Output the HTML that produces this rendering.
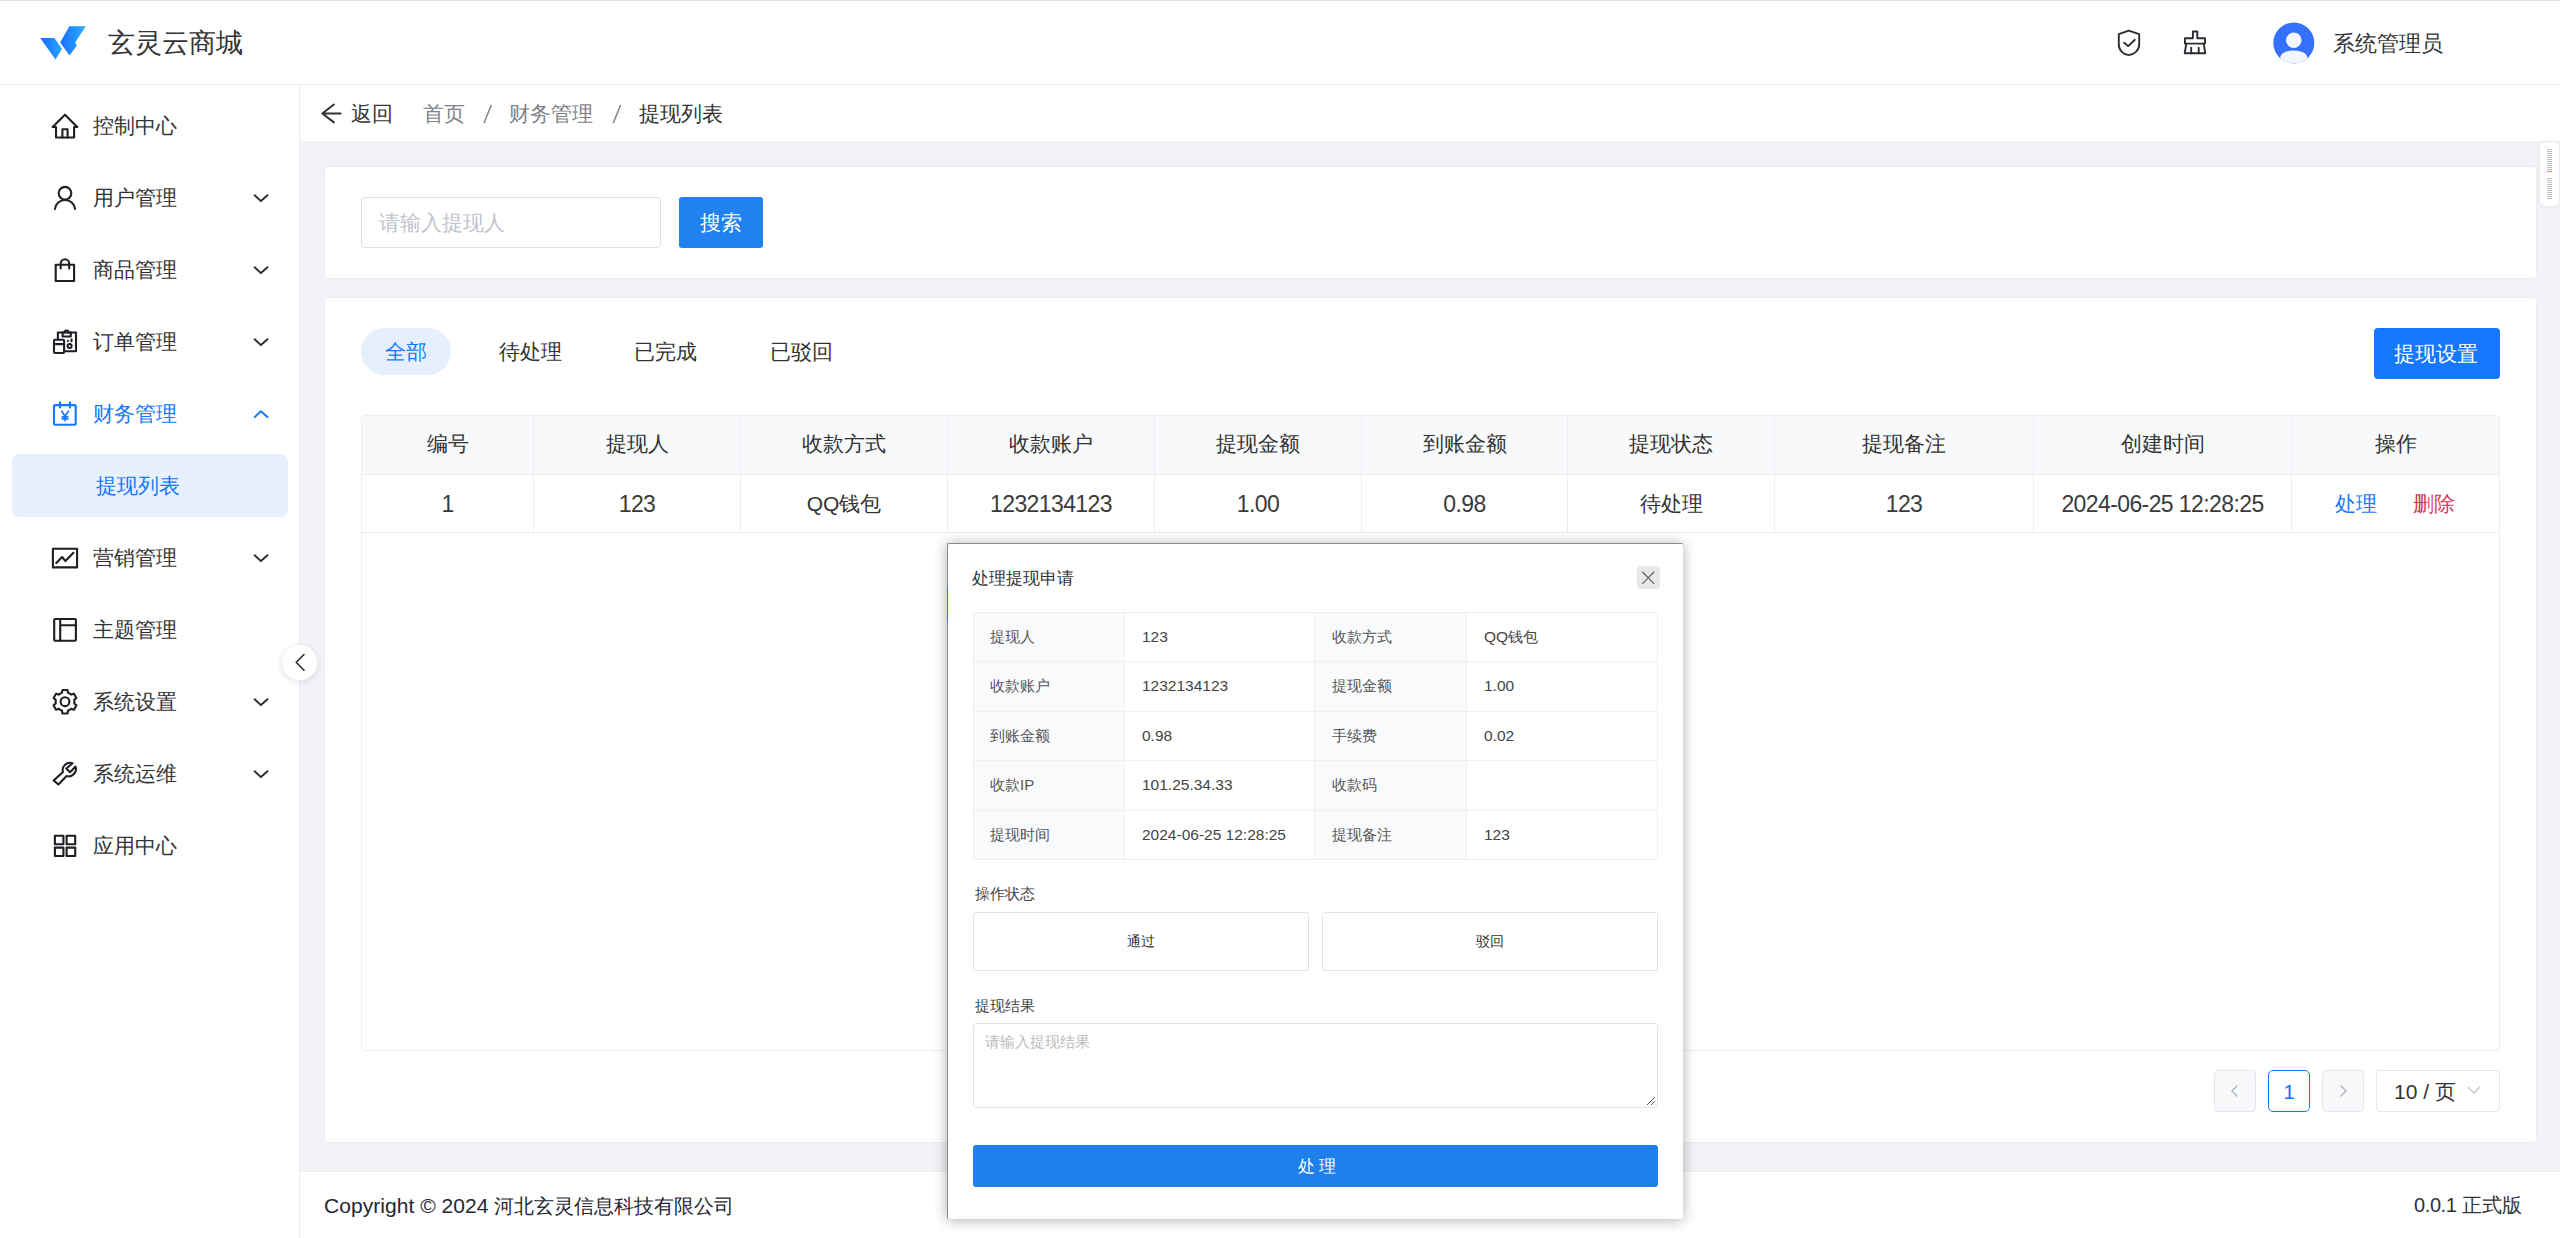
<!DOCTYPE html>
<html><head><meta charset="utf-8">
<style>
*{box-sizing:border-box;margin:0;padding:0}
html,body{width:2560px;height:1238px;overflow:hidden;background:#fff;font-family:"Liberation Sans",sans-serif;color:#333}
.a{position:absolute}
.t{position:absolute;white-space:nowrap;line-height:1}
svg{position:absolute;overflow:visible}
.ic{width:40px;height:40px;left:45px}
.ic *{fill:none;stroke:#1c1f23;stroke-width:2.1;stroke-linejoin:round;stroke-linecap:round}
.ic.blue *{stroke:#1677ff}
.chev{left:245px;width:30px;height:30px}
.chev *{fill:none;stroke:#2a2d31;stroke-width:2;stroke-linecap:round;stroke-linejoin:round}
.mi{font-size:21px;left:93px;color:#333}
.th{font-size:21px;color:#333;text-align:center}
.td{font-size:21px;color:#333;text-align:center}
.vl{position:absolute;width:1px;background:#ebeef5}
.hl{position:absolute;height:1px;background:#ebeef5}
.dl{font-size:15px;color:#555}
.dv{font-size:15.5px;color:#444}
.n{font-size:23px;letter-spacing:-0.6px;color:#3a3a3a}
</style></head><body>
<!-- top line -->
<div class="a" style="left:0;top:0;width:2560px;height:1px;background:#dddfdc"></div>
<!-- header -->
<div class="a" style="left:0;top:84px;width:2560px;height:1px;background:#eceef3"></div>
<svg style="left:0;top:0;width:100px;height:80px" viewBox="0 0 100 80">
<defs><linearGradient id="lg" x1="0" y1="0" x2="1" y2="0"><stop offset="0" stop-color="#1668ff"/><stop offset="1" stop-color="#2aa6ff"/></linearGradient>
<linearGradient id="lg2" x1="0" y1="0" x2="1" y2="0"><stop offset="0" stop-color="#1a6dff"/><stop offset="1" stop-color="#2ab0ff"/></linearGradient></defs>
<path d="M40.2 38.1 L54.4 38.1 L62 49 L55.5 59.6 Z" fill="url(#lg)"/>
<path d="M69.3 26.3 L85.8 26.3 L75.1 42.5 L76.9 45.4 L69.5 55.6 L60.2 42.5 Z" fill="url(#lg2)"/>
</svg>
<div class="t" style="left:108px;top:30px;font-size:27px;color:#333">玄灵云商城</div>

<!-- header right icons -->
<svg style="left:2108px;top:22px;width:40px;height:40px" viewBox="0 0 40 40"><g fill="none" stroke="#2a2d31" stroke-width="1.9" stroke-linejoin="round" stroke-linecap="round">
<path d="M20.7 8.7 L10.8 12.1 V22.6 C10.8 28.5 15.5 32.6 20.7 33.1 C25.9 32.6 31.2 28.5 31.2 22.6 V12.1 Z"/>
<path d="M16.2 20.7 L20.2 24.1 L26.8 17.8"/></g></svg>
<svg style="left:2175px;top:22px;width:40px;height:40px" viewBox="0 0 40 40"><g fill="none" stroke="#2a2d31" stroke-width="1.9" stroke-linejoin="round" stroke-linecap="round">
<path d="M17.9 16.2 V9.5 H22.3 V16.2 H30 V21.6 H9.9 V16.2 Z"/>
<path d="M11.3 21.6 L9.7 31.2 H30.2 L28.8 21.6"/>
<path d="M16.2 25.8 V31.2 M23.7 25.8 V31.2"/></g></svg>
<svg style="left:2265px;top:15px;width:60px;height:60px" viewBox="0 0 60 60">
<defs><clipPath id="av"><circle cx="28.8" cy="27.9" r="20.5"/></clipPath></defs>
<circle cx="28.8" cy="27.9" r="20.5" fill="#3571ff"/>
<g clip-path="url(#av)" fill="#f3f6fe"><circle cx="28.8" cy="25.2" r="7.7"/><ellipse cx="28.8" cy="42.4" rx="13.5" ry="7"/></g>
</svg>
<div class="t" style="left:2333px;top:33px;font-size:22px;color:#333">系统管理员</div>

<!-- sidebar -->
<div class="a" style="left:299px;top:85px;width:1px;height:1153px;background:#eceef3"></div>
<div class="a" style="left:12px;top:454px;width:276px;height:63px;background:#e7f0fe;border-radius:7px"></div>

<svg class="ic" style="top:105px" viewBox="0 0 40 40"><path d="M7.6 22 L20 9.7 L32.3 22 H29.1 V32.5 H11 V22 Z"/><path d="M17.4 32.5 V24.2 H22.6 V32.5"/></svg>
<div class="t mi" style="top:115px">控制中心</div>

<svg class="ic" style="top:177px" viewBox="0 0 40 40"><circle cx="20" cy="16.2" r="6.3"/><path d="M10 32 A10.05 10.05 0 0 1 30 32"/></svg>
<div class="t mi" style="top:187px">用户管理</div>
<svg class="chev" style="top:182px" viewBox="0 0 30 30"><path d="M9.7 13.2 L15.9 19.1 L22.5 13.2"/></svg>

<svg class="ic" style="top:249px" viewBox="0 0 40 40"><rect x="10.7" y="15.8" width="18.4" height="16.2"/><path d="M15.7 19.4 V14.5 A4.25 4.25 0 0 1 24.2 14.5 V19.4"/></svg>
<div class="t mi" style="top:259px">商品管理</div>
<svg class="chev" style="top:254px" viewBox="0 0 30 30"><path d="M9.7 13.2 L15.9 19.1 L22.5 13.2"/></svg>

<svg class="ic" style="top:321px" viewBox="0 0 40 40"><path d="M12.9 18.7 V11.5 H31 V30.2 H19.1"/><path d="M17.6 11.5 V15.5 H25.8 V11.5 H23.6 A2 2 0 0 0 19.6 11.5 Z"/><rect x="9" y="18.7" width="10.1" height="13.3" rx="1"/><path d="M9 23.1 H19.1"/><circle cx="24.6" cy="25" r="2"/><path d="M22.9 19.8 V20 M26.5 18.6 V20.2"/></svg>
<div class="t mi" style="top:331px">订单管理</div>
<svg class="chev" style="top:326px" viewBox="0 0 30 30"><path d="M9.7 13.2 L15.9 19.1 L22.5 13.2"/></svg>

<svg class="ic blue" style="top:393px" viewBox="0 0 40 40"><g><rect x="9" y="12.1" width="21.7" height="19.7" rx="1"/><path d="M15 9.4 V14.5 M24.9 9.4 V14.5"/><path d="M16.8 18.3 L20 23.3 L23.3 18.3 M17.3 23.8 H22.8 M17.3 25.9 H22.8 M20 23.3 V27.6" style="stroke-width:1.7"/></g></svg>
<div class="t mi" style="top:403px;color:#1677ff">财务管理</div>
<svg class="chev" style="top:398px" viewBox="0 0 30 30"><path d="M9.7 19.1 L15.9 13.2 L22.5 19.1" style="stroke:#1677ff"/></svg>

<div class="t mi" style="top:475px;left:96px;color:#1677ff">提现列表</div>

<svg class="ic" style="top:537px" viewBox="0 0 40 40"><rect x="7.9" y="11.8" width="24.2" height="18.6"/><path d="M11.3 26 L17.1 20 L20.4 24.1 L28.4 15.8"/></svg>
<div class="t mi" style="top:547px">营销管理</div>
<svg class="chev" style="top:542px" viewBox="0 0 30 30"><path d="M9.7 13.2 L15.9 19.1 L22.5 13.2"/></svg>

<svg class="ic" style="top:609px" viewBox="0 0 40 40"><rect x="9.2" y="10" width="21.7" height="21.8" rx="1"/><path d="M15.2 10 V31.8 M15.2 16.2 H30.9"/></svg>
<div class="t mi" style="top:619px">主题管理</div>

<svg class="ic" style="top:681px" viewBox="0 0 40 40"><path d="M23.82 12.11 L23.06 11.81 L22.49 8.96 L17.51 8.96 L16.94 11.81 L16.18 12.11 L14.47 13.10 L13.83 13.61 L11.08 12.67 L8.59 16.99 L10.77 18.91 L10.65 19.72 L10.65 21.68 L10.77 22.49 L8.59 24.41 L11.08 28.73 L13.83 27.79 L14.47 28.30 L16.18 29.29 L16.94 29.59 L17.51 32.44 L22.49 32.44 L23.06 29.59 L23.82 29.29 L25.53 28.30 L26.17 27.79 L28.92 28.73 L31.41 24.41 L29.23 22.49 L29.35 21.68 L29.35 19.72 L29.23 18.91 L31.41 16.99 L28.92 12.67 L26.17 13.61 L25.53 13.10Z"/><circle cx="20" cy="20.7" r="4.4"/></svg>
<div class="t mi" style="top:691px">系统设置</div>
<svg class="chev" style="top:686px" viewBox="0 0 30 30"><path d="M9.7 13.2 L15.9 19.1 L22.5 13.2"/></svg>

<svg class="ic" style="top:753px" viewBox="0 0 40 40"><path d="M8.7 27.5 L17.9 18.9 A7.3 7.3 0 0 1 27.5 10.3 L21.3 15.5 L25 19.2 L30.5 13.6 A7.3 7.3 0 0 1 21.6 23.1 L13.4 31.5 Z"/></svg>
<div class="t mi" style="top:763px">系统运维</div>
<svg class="chev" style="top:758px" viewBox="0 0 30 30"><path d="M9.7 13.2 L15.9 19.1 L22.5 13.2"/></svg>

<svg class="ic" style="top:825px" viewBox="0 0 40 40"><rect x="9.9" y="10.8" width="8.5" height="8.4"/><rect x="21.6" y="10.8" width="8.6" height="8.4"/><rect x="9.9" y="22.6" width="8.5" height="8.4"/><rect x="21.6" y="22.6" width="8.6" height="8.4"/></svg>
<div class="t mi" style="top:835px">应用中心</div>

<!-- breadcrumb -->
<div class="a" style="left:300px;top:141px;width:2260px;height:1031px;background:#f2f3f7"></div>
<svg style="left:310px;top:95px;width:40px;height:40px" viewBox="0 0 40 40"><path d="M23.9 9.5 L12.3 18.5 L23.9 27.4 M12.3 18.5 H30.6" fill="none" stroke="#333" stroke-width="2" stroke-linecap="round" stroke-linejoin="round"/></svg>
<div class="t" style="left:351px;top:103px;font-size:21px;color:#333">返回</div>
<div class="t" style="left:423px;top:103px;font-size:21px;color:#808288">首页</div>
<svg style="left:470px;top:95px;width:160px;height:40px" viewBox="470 95 160 40"><path d="M484 123 L491.3 105 M613.3 123 L620.6 105" stroke="#808288" stroke-width="1.5" fill="none"/></svg>
<div class="t" style="left:509px;top:103px;font-size:21px;color:#808288">财务管理</div>

<div class="t" style="left:639px;top:103px;font-size:21px;color:#333">提现列表</div>

<!-- collapse btn -->
<div class="a" style="left:281px;top:644px;width:37px;height:37px;border-radius:50%;background:#fff;box-shadow:0 2px 6px rgba(0,0,0,0.10);border:1px solid #eef0f4"></div>
<svg style="left:290px;top:650px;width:24px;height:24px" viewBox="290 650 24 24"><path d="M304 654.5 L296.2 662.3 L304 670.3" fill="none" stroke="#2a2d31" stroke-width="1.6" stroke-linecap="round" stroke-linejoin="round"/></svg>

<!-- card1 -->
<div class="a" style="left:325px;top:167px;width:2211px;height:111px;background:#fff;border-radius:4px;box-shadow:0 0 0 1px #ececf2"></div>
<div class="a" style="left:361px;top:197px;width:300px;height:51px;border:1px solid #dcdfe6;border-radius:4px;background:#fff"></div>
<div class="t" style="left:379px;top:212px;font-size:21px;color:#c0c4cc">请输入提现人</div>
<div class="a" style="left:679px;top:197px;width:84px;height:51px;background:#2281f0;border-radius:3px"></div>
<div class="t" style="left:700px;top:212px;font-size:21px;color:#fff">搜索</div>

<!-- card2 -->
<div class="a" style="left:325px;top:298px;width:2211px;height:844px;background:#fff;border-radius:4px;box-shadow:0 0 0 1px #ececf2"></div>
<div class="a" style="left:361px;top:328px;width:90px;height:47px;background:#e6f0fd;border-radius:24px"></div>
<div class="t" style="left:385px;top:341px;font-size:21px;color:#1677ff">全部</div>
<div class="t" style="left:499px;top:341px;font-size:21px;color:#333">待处理</div>
<div class="t" style="left:634px;top:341px;font-size:21px;color:#333">已完成</div>
<div class="t" style="left:770px;top:341px;font-size:21px;color:#333">已驳回</div>
<div class="a" style="left:2374px;top:328px;width:126px;height:51px;background:#1677ff;border-radius:4px"></div>
<div class="t" style="left:2394px;top:343px;font-size:21px;color:#fff">提现设置</div>

<!-- table -->
<div class="a" style="left:361px;top:415px;width:2139px;height:636px;border:1px solid #ebeef5;border-radius:4px;background:#fff"></div>
<div class="a" style="left:362px;top:416px;width:2137px;height:58px;background:#f8f9fb"></div>
<div class="hl" style="left:362px;top:474px;width:2137px"></div>
<div class="hl" style="left:362px;top:532px;width:2137px"></div>
<div class="vl" style="left:533px;top:416px;height:117px"></div>
<div class="vl" style="left:740px;top:416px;height:117px"></div>
<div class="vl" style="left:947px;top:416px;height:117px"></div>
<div class="vl" style="left:1154px;top:416px;height:117px"></div>
<div class="vl" style="left:1361px;top:416px;height:117px"></div>
<div class="vl" style="left:1567px;top:416px;height:117px"></div>
<div class="vl" style="left:1774px;top:416px;height:117px"></div>
<div class="vl" style="left:2033px;top:416px;height:117px"></div>
<div class="vl" style="left:2291px;top:416px;height:117px"></div>

<div class="t th" style="left:362px;width:171px;top:433px">编号</div>
<div class="t th" style="left:534px;width:206px;top:433px">提现人</div>
<div class="t th" style="left:741px;width:206px;top:433px">收款方式</div>
<div class="t th" style="left:948px;width:206px;top:433px">收款账户</div>
<div class="t th" style="left:1155px;width:206px;top:433px">提现金额</div>
<div class="t th" style="left:1362px;width:205px;top:433px">到账金额</div>
<div class="t th" style="left:1568px;width:206px;top:433px">提现状态</div>
<div class="t th" style="left:1775px;width:258px;top:433px">提现备注</div>
<div class="t th" style="left:2034px;width:257px;top:433px">创建时间</div>
<div class="t th" style="left:2292px;width:207px;top:433px">操作</div>

<div class="t td n" style="left:362px;width:171px;top:493px">1</div>
<div class="t td n" style="left:534px;width:206px;top:493px">123</div>
<div class="t td" style="left:741px;width:206px;top:493px">QQ钱包</div>
<div class="t td n" style="left:948px;width:206px;top:493px">1232134123</div>
<div class="t td n" style="left:1155px;width:206px;top:493px">1.00</div>
<div class="t td n" style="left:1362px;width:205px;top:493px">0.98</div>
<div class="t td" style="left:1568px;width:206px;top:493px">待处理</div>
<div class="t td n" style="left:1775px;width:258px;top:493px">123</div>
<div class="t td n" style="left:2034px;width:257px;top:493px">2024-06-25 12:28:25</div>
<div class="t" style="left:2335px;top:493px;font-size:21px;color:#1677ff">处理</div>
<div class="t" style="left:2413px;top:493px;font-size:21px;color:#d6385a">删除</div>

<!-- pagination -->
<div class="a" style="left:2214px;top:1070px;width:42px;height:42px;border:1px solid #e4e7ed;border-radius:4px;background:#f7f8fa"></div>
<svg style="left:2214px;top:1070px;width:42px;height:42px" viewBox="0 0 42 42"><path d="M23.5 15.5 L18 21 L23.5 26.5" fill="none" stroke="#b5b9c0" stroke-width="1.5"/></svg>
<div class="a" style="left:2268px;top:1070px;width:42px;height:42px;border:1.5px solid #1677ff;border-radius:5px;background:#fff"></div>
<div class="t" style="left:2268px;width:42px;text-align:center;top:1081px;font-size:21px;color:#1677ff">1</div>
<div class="a" style="left:2322px;top:1070px;width:42px;height:42px;border:1px solid #e4e7ed;border-radius:4px;background:#f7f8fa"></div>
<svg style="left:2322px;top:1070px;width:42px;height:42px" viewBox="0 0 42 42"><path d="M18.5 15.5 L24 21 L18.5 26.5" fill="none" stroke="#b5b9c0" stroke-width="1.5"/></svg>
<div class="a" style="left:2376px;top:1070px;width:124px;height:42px;border:1px solid #e4e7ed;border-radius:4px;background:#fff"></div>
<div class="t" style="left:2394px;top:1081px;font-size:21px;color:#333">10 / 页</div>
<svg style="left:2465px;top:1080px;width:20px;height:20px" viewBox="0 0 20 20"><path d="M3 7 L9 13 L15 7" fill="none" stroke="#c0c4cc" stroke-width="1.4"/></svg>

<!-- footer -->
<div class="a" style="left:300px;top:1171px;width:2260px;height:67px;background:#fff;border-top:1px solid #ececf2"></div>
<div class="t" style="left:324px;top:1195px;font-size:20px;color:#1f2733"><span style="font-size:21px;letter-spacing:0.05px">Copyright © 2024 </span>河北玄灵信息科技有限公司</div>
<div class="t" style="left:2414px;top:1195px;font-size:20px;color:#333"><span style="letter-spacing:-0.4px">0.0.1 </span>正式版</div>

<!-- right widget -->
<div class="a" style="left:2540px;top:142px;width:19px;height:64px;background:#fff;border-radius:5px;box-shadow:0 0 4px rgba(0,0,0,0.08)"></div>
<svg style="left:2540px;top:142px;width:19px;height:64px" viewBox="2540 142 19 64"><g stroke="#a8a8a8" stroke-width="0.7">
<path d="M2547 149.5h5M2547 151.5h5M2547 153.5h5M2547 155.5h5M2547 157.5h5M2547 159.5h5M2547 161.5h5M2547 163.5h5M2547 165.5h5M2547 167.5h5M2547 169.5h5"/>
<path d="M2547 178.5h5M2547 180.5h5M2547 182.5h5M2547 184.5h5M2547 186.5h5M2547 188.5h5M2547 190.5h5M2547 192.5h5M2547 194.5h5M2547 196.5h5M2547 198.5h5"/></g>
<path d="M2547 171.5h5" stroke="#ff9a00" stroke-width="1"/></svg>

<!-- modal -->
<div class="a" style="left:947px;top:543px;width:736px;height:676px;background:#fff;border-top:1px solid #8a8a8a;border-left:1px solid #8a8a8a;box-shadow:0 1px 14px rgba(0,0,0,0.32);border-radius:2px"></div>
<div class="a" style="left:947px;top:586px;width:1px;height:36px;background:#3f6fc4"></div>
<div class="t" style="left:972px;top:571px;font-size:16.8px;color:#333">处理提现申请</div>
<div class="a" style="left:1637px;top:566px;width:23px;height:23px;background:#e8e8e8;border-radius:4px"></div>
<svg style="left:1637px;top:566px;width:23px;height:23px" viewBox="0 0 23 23"><path d="M5.3 5.7 L17.2 17.9 M17.2 5.7 L5.3 17.9" stroke="#666" stroke-width="1.3" fill="none"/></svg>

<div class="a" style="left:973px;top:612px;width:685px;height:248px;border:1px solid #eef0f5;border-radius:4px;background:#fff"></div>
<div class="a" style="left:974px;top:613px;width:151px;height:246px;background:#f9fafc"></div>
<div class="a" style="left:1315px;top:613px;width:151px;height:246px;background:#f9fafc"></div>
<div class="vl" style="left:1124px;top:613px;height:246px;background:#eef0f5"></div>
<div class="vl" style="left:1314px;top:613px;height:246px;background:#eef0f5"></div>
<div class="vl" style="left:1466px;top:613px;height:246px;background:#eef0f5"></div>
<div class="hl" style="left:974px;top:661px;width:683px;background:#eef0f5"></div>
<div class="hl" style="left:974px;top:711px;width:683px;background:#eef0f5"></div>
<div class="hl" style="left:974px;top:760px;width:683px;background:#eef0f5"></div>
<div class="hl" style="left:974px;top:810px;width:683px;background:#eef0f5"></div>

<div class="t dl" style="left:990px;top:629px">提现人</div>
<div class="t dv" style="left:1142px;top:629px">123</div>
<div class="t dl" style="left:1332px;top:629px">收款方式</div>
<div class="t dv" style="left:1484px;top:629px">QQ<span style="font-size:14.5px">钱包</span></div>
<div class="t dl" style="left:990px;top:678px">收款账户</div>
<div class="t dv" style="left:1142px;top:678px">1232134123</div>
<div class="t dl" style="left:1332px;top:678px">提现金额</div>
<div class="t dv" style="left:1484px;top:678px">1.00</div>
<div class="t dl" style="left:990px;top:728px">到账金额</div>
<div class="t dv" style="left:1142px;top:728px">0.98</div>
<div class="t dl" style="left:1332px;top:728px">手续费</div>
<div class="t dv" style="left:1484px;top:728px">0.02</div>
<div class="t dl" style="left:990px;top:777px">收款IP</div>
<div class="t dv" style="left:1142px;top:777px">101.25.34.33</div>
<div class="t dl" style="left:1332px;top:777px">收款码</div>
<div class="t dl" style="left:990px;top:827px">提现时间</div>
<div class="t dv" style="left:1142px;top:827px">2024-06-25 12:28:25</div>
<div class="t dl" style="left:1332px;top:827px">提现备注</div>
<div class="t dv" style="left:1484px;top:827px">123</div>

<div class="t" style="left:975px;top:887px;font-size:14.5px;color:#444">操作状态</div>
<div class="a" style="left:973px;top:912px;width:336px;height:59px;border:1px solid #e3e3e3;border-radius:3px"></div>
<div class="t" style="left:973px;width:336px;text-align:center;top:934px;font-size:14px;color:#333">通过</div>
<div class="a" style="left:1322px;top:912px;width:336px;height:59px;border:1px solid #e3e3e3;border-radius:3px"></div>
<div class="t" style="left:1322px;width:336px;text-align:center;top:934px;font-size:14px;color:#333">驳回</div>

<div class="t" style="left:975px;top:999px;font-size:14.5px;color:#444">提现结果</div>
<div class="a" style="left:973px;top:1023px;width:685px;height:85px;border:1px solid #e3e3e3;border-radius:3px"></div>
<div class="t" style="left:985px;top:1035px;font-size:14.8px;color:#bbb">请输入提现结果</div>
<svg style="left:1645px;top:1095px;width:12px;height:12px" viewBox="0 0 12 12"><path d="M2 10 L10 2 M6 10 L10 6" stroke="#555" stroke-width="1" fill="none"/></svg>

<div class="a" style="left:973px;top:1145px;width:685px;height:42px;background:#1f80ec;border-radius:3px"></div>
<div class="t" style="left:976px;width:685px;text-align:center;top:1158px;font-size:16.5px;color:#fff;letter-spacing:4px">处理</div>
</body></html>
